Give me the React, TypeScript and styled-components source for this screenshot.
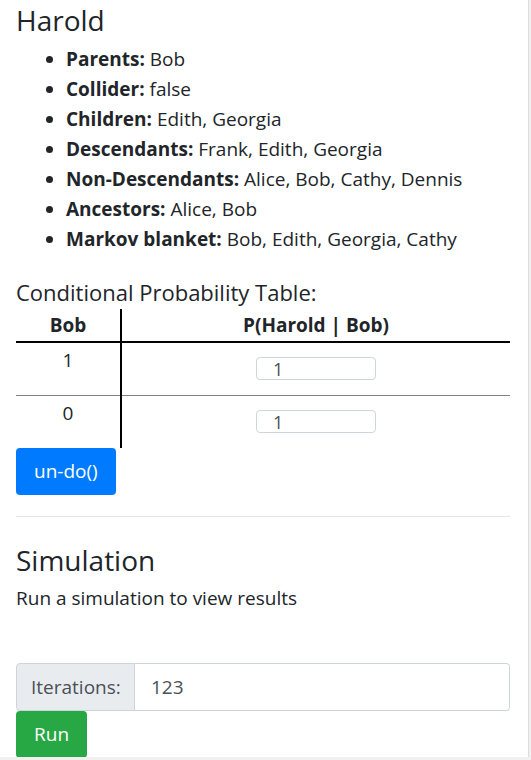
import React from "react";
import styled, { createGlobalStyle } from "styled-components";

const Global = createGlobalStyle`
  html, body { margin: 0; padding: 0; }
  body {
    background: #f1f1f1;
    font-family: "Open Sans", "Noto Sans", sans-serif;
    color: #212529;
  }
`;

const Panel = styled.div`
  box-sizing: border-box;
  width: 529px;
  height: 757px;
  overflow: hidden;
  background: #ffffff;
  border-right: 1px solid #dcdcdc;
  padding: 0 18px 0 16px;
  font-size: 19px;
  line-height: 30px;
`;

const Title = styled.h3`
  margin: 0;
  padding-top: 1px;
  font-size: 28px;
  font-weight: 400;
  line-height: 38px;
`;

const Facts = styled.ul`
  margin: 5px 0 0 0;
  padding-left: 50px;
  list-style: disc;
`;

const Fact = styled.li`
  line-height: 30px;
  & b { font-weight: 700; }
`;

const SubTitle = styled.h5`
  margin: 23px 0 0 0;
  font-size: 22px;
  font-weight: 400;
  line-height: 30px;
`;

const Table = styled.table`
  width: 100%;
  border-collapse: collapse;
  margin-top: 2px;
`;

const Th = styled.th<{ $first?: boolean }>`
  font-weight: 700;
  text-align: center;
  padding: 1px 0 1px;
  line-height: 30px;
  border-bottom: 2px solid #000;
  border-right: ${(p) => (p.$first ? "2px solid #000" : "none")};
  width: ${(p) => (p.$first ? "104px" : "auto")};
`;

const Tr = styled.tr<{ $last?: boolean }>`
  border-bottom: ${(p) => (p.$last ? "none" : "1px solid #808080")};
`;

const Td = styled.td<{ $first?: boolean }>`
  text-align: center;
  vertical-align: top;
  padding: 4px 0 15px;
  line-height: 26px;
  color: #212529;
  border-right: ${(p) => (p.$first ? "2px solid #000" : "none")};
`;

const CellInput = styled.input`
  box-sizing: border-box;
  width: 120px;
  height: 23px;
  margin-top: 10px;
  border: 1px solid #ced4da;
  border-radius: 4px;
  padding: 0 16px;
  font-family: inherit;
  font-size: 18px;
  line-height: 21px;
  color: #495057;
  vertical-align: top;
  background: #fff;
`;

const Button = styled.button<{ $tone: "primary" | "success" }>`
  display: block;
  box-sizing: border-box;
  border: none;
  border-radius: 4px;
  color: #fff;
  font-family: inherit;
  font-size: 19px;
  line-height: 27px;
  padding: 10px 18px;
  background: ${(p) => (p.$tone === "primary" ? "#007bff" : "#28a745")};
  cursor: pointer;
`;

const Rule = styled.hr`
  margin: 21px 0 0 0;
  border: 0;
  border-top: 1px solid #e5e5e5;
`;

const Section = styled.h3`
  margin: 24px 0 0 0;
  font-size: 28px;
  font-weight: 400;
  line-height: 38px;
`;

const Text = styled.p`
  margin: 6px 0 0 0;
  line-height: 27px;
`;

const InputGroup = styled.div`
  display: flex;
  margin-top: 51px;
  height: 48px;
`;

const Addon = styled.span`
  display: flex;
  align-items: center;
  box-sizing: border-box;
  width: 119px;
  padding: 0 14px;
  background: #e9ecef;
  border: 1px solid #ced4da;
  border-radius: 4px 0 0 4px;
  color: #495057;
  white-space: nowrap;
`;

const Field = styled.input`
  flex: 1;
  box-sizing: border-box;
  border: 1px solid #ced4da;
  border-left: none;
  border-radius: 0 4px 4px 0;
  padding: 0 16px;
  font-family: inherit;
  font-size: 19px;
  color: #495057;
  background: #fff;
`;

export default function App() {
  return (
    <>
      <Global />
      <Panel>
        <Title>Harold</Title>
        <Facts>
          <Fact><b>Parents:</b> Bob</Fact>
          <Fact><b>Collider:</b> false</Fact>
          <Fact><b>Children:</b> Edith, Georgia</Fact>
          <Fact><b>Descendants:</b> Frank, Edith, Georgia</Fact>
          <Fact><b>Non-Descendants:</b> Alice, Bob, Cathy, Dennis</Fact>
          <Fact><b>Ancestors:</b> Alice, Bob</Fact>
          <Fact><b>Markov blanket:</b> Bob, Edith, Georgia, Cathy</Fact>
        </Facts>
        <SubTitle>Conditional Probability Table:</SubTitle>
        <Table>
          <thead>
            <tr>
              <Th $first>Bob</Th>
              <Th>P(Harold | Bob)</Th>
            </tr>
          </thead>
          <tbody>
            <Tr>
              <Td $first>1</Td>
              <Td><CellInput defaultValue="1" /></Td>
            </Tr>
            <Tr $last>
              <Td $first>0</Td>
              <Td><CellInput defaultValue="1" /></Td>
            </Tr>
          </tbody>
        </Table>
        <Button $tone="primary">un-do()</Button>
        <Rule />
        <Section>Simulation</Section>
        <Text>Run a simulation to view results</Text>
        <InputGroup>
          <Addon>Iterations:</Addon>
          <Field defaultValue="123" />
        </InputGroup>
        <Button $tone="success">Run</Button>
      </Panel>
    </>
  );
}
